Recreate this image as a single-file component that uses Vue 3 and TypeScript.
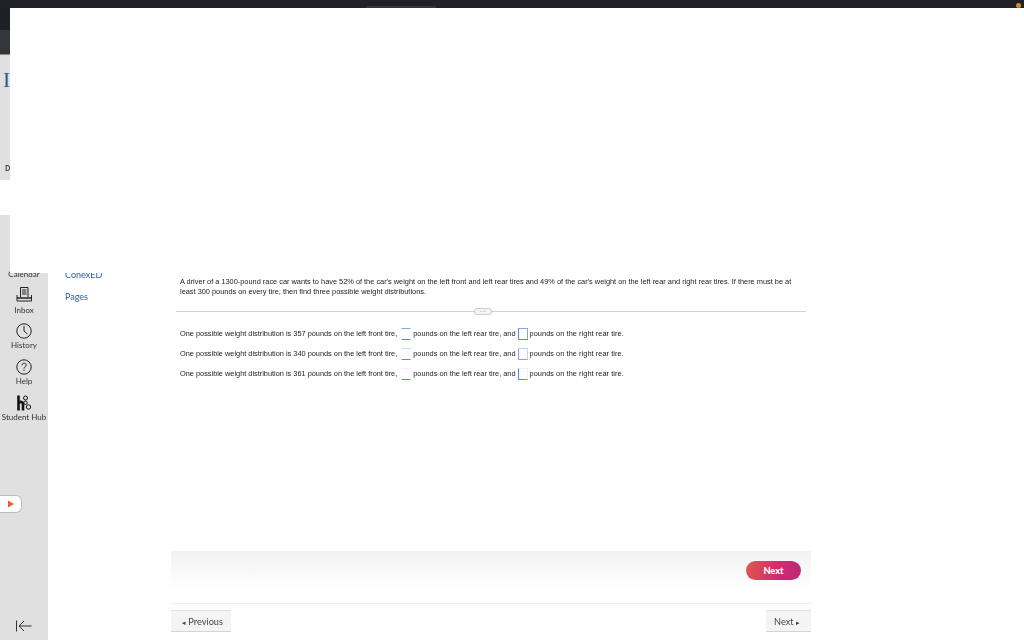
<template>
  <div class="page">
    <div class="topbar">
      <div class="tab"></div>
      <span class="dot"></span>
    </div>
    <div class="body">
      <aside class="rail">
        <div class="rail-dark"></div>
        <div class="rail-mid"></div>
        <div class="rail-head">
          <span class="logo">I</span>
          <span class="cut">D</span>
        </div>
        <div class="rail-gap"></div>
        <div class="rail-nav">
          <span class="rail-label cal">Calendar</span>
          <div class="rail-item inbox">
            <svg width="16" height="16" viewBox="0 0 16 16" fill="none" stroke="#222" stroke-width="1">
              <path d="M4.500 11V1.500h7.500V11" />
              <path d="M6 4h4.500M6 6h4.500M6 8h4.500" />
              <path d="M1 9v6h14.500V9" />
              <path d="M1 12h14.500" stroke-width="1.500" />
            </svg>
            <span class="rail-label">Inbox</span>
          </div>
          <div class="rail-item">
            <svg width="16" height="16" viewBox="0 0 16 16" fill="none" stroke="#222" stroke-width="1">
              <circle cx="8" cy="8" r="7.200" />
              <path d="M8 3v5l3.500 3" />
            </svg>
            <span class="rail-label">History</span>
          </div>
          <div class="rail-item">
            <svg width="16" height="16" viewBox="0 0 16 16" fill="none" stroke="#222" stroke-width="1">
              <circle cx="8" cy="8" r="7.200" />
              <path d="M6 6.300c0-2.800 4.200-2.800 4.200-.2 0 1.700-2.200 1.700-2.200 3.500" />
              <path d="M8 10.800v1.300" />
            </svg>
            <span class="rail-label">Help</span>
          </div>
          <div class="rail-item">
            <svg width="16" height="16" viewBox="0 0 16 16" fill="none" stroke="#111">
              <path d="M2.500 0.500v15" stroke-width="2.600" />
              <path d="M2.500 8c2-1.700 4.500-1.500 4.500 1.500v6" stroke-width="2.600" />
              <circle cx="9.500" cy="3" r="2" stroke-width="1" />
              <circle cx="9.500" cy="7.800" r="1.700" stroke-width="1" />
              <circle cx="12.500" cy="12" r="2.200" stroke-width="1" />
            </svg>
            <span class="rail-label">Student Hub</span>
          </div>
        </div>
        <div class="play">
          <svg width="8" height="8" viewBox="0 0 8 8"><path d="M1 0.500 7 4 1 7.500z" fill="#e8662a" /></svg>
        </div>
        <div class="collapse">
          <svg width="16" height="12" viewBox="0 0 16 12" fill="none" stroke="#333" stroke-width="1">
            <path d="M0.500 0.500v11" />
            <path d="M15.500 6H3" />
            <path d="M8 1 3 6l5 5" />
          </svg>
        </div>
      </aside>

      <nav class="links">
        <a class="link cut-link">ConexED</a>
        <a class="link">Pages</a>
      </nav>

      <main class="main">
        <div class="question">
          <p class="prompt">A driver of a 1300-pound race car wants to have 52% of the car's weight on the left front and left rear tires and 49% of the car's weight on the left rear and right rear tires. If there must be at least 300 pounds on every tire, then find three possible weight distributions.</p>
          <div class="divider">
            <span class="more">...</span>
          </div>
          <div class="answers">
            <div v-for="row in rows" :key="row.front" class="answer">
              <span>One possible weight distribution is {{ row.front }} pounds on the left front tire,</span>
              <span class="blank first" :class="row.tone"></span>
              <span>pounds on the left rear tire, and</span>
              <span class="blank second" :class="row.tone"></span>
              <span class="last">pounds on the right rear tire.</span>
            </div>
          </div>
        </div>
        <div class="action">
          <button class="next-pill">Next</button>
        </div>
        <div class="pager">
          <button class="page-btn prev"><span class="tri">◂</span> Previous</button>
          <button class="page-btn fwd">Next <span class="tri">▸</span></button>
        </div>
      </main>
    </div>
    <div class="overlay"></div>
  </div>
</template>

<script setup lang="ts">
const rows = [
  { front: 357, tone: "tone-a" },
  { front: 340, tone: "tone-b" },
  { front: 361, tone: "tone-c" },
];
</script>

<style>
html,
body {
  margin: 0;
  background: #fff;
}
</style>

<style scoped>
.page {
  position: relative;
  width: 1024px;
  height: 640px;
  overflow: hidden;
  font-family: "Lato", "Liberation Sans", sans-serif;
  background: #fff;
}

.topbar {
  position: relative;
  height: 8px;
  background: #202126;
}

.tab {
  position: absolute;
  left: 366px;
  top: 6px;
  width: 70px;
  height: 2px;
  background: #35363b;
}

.dot {
  position: absolute;
  left: 1016px;
  top: 3px;
  width: 5px;
  height: 5px;
  border-radius: 50%;
  background: #d98a2b;
}

.body {
  display: flex;
  height: 632px;
}

.rail {
  position: relative;
  display: flex;
  flex-direction: column;
  width: 48px;
  flex: none;
  background: #e0e0e0;
}

.rail-dark {
  height: 22px;
  background: #1f2025;
}

.rail-mid {
  height: 25px;
  background: #34363c;
  border-bottom: 1px solid #8a8a8a;
  box-sizing: border-box;
}

.rail-head {
  position: relative;
  height: 125px;
}

.logo {
  position: absolute;
  left: 3px;
  top: 13px;
  font-family: "Liberation Serif", serif;
  font-size: 21px;
  line-height: 24px;
  color: #2a5a9c;
}

.cut {
  position: absolute;
  left: 5px;
  top: 109px;
  font-family: "Liberation Mono", monospace;
  font-size: 9px;
  line-height: 10px;
  color: #222;
  filter: blur(0.3px);
}

.rail-gap {
  height: 35px;
  background: #fff;
}

.rail-nav {
  display: flex;
  flex-direction: column;
  align-items: center;
  padding-top: 54px;
  filter: blur(0.3px);
}

.rail-label {
  font-size: 8px;
  line-height: 11px;
  color: #333;
  white-space: nowrap;
}

.cal {
  height: 11px;
}

.rail-item {
  display: flex;
  flex-direction: column;
  align-items: center;
  gap: 1px;
  height: 36px;
}

.inbox {
  margin-top: 6px;
  height: 37px;
  gap: 3px;
}

.play {
  display: flex;
  align-items: center;
  padding-left: 7px;
  box-sizing: border-box;
  margin-top: 64px;
  width: 22px;
  height: 18px;
  background: #fff;
  border: 1px solid #bbb;
  border-left: none;
  border-radius: 0 6px 6px 0;
}

.collapse {
  margin-top: auto;
  margin-bottom: 8px;
  padding-left: 16px;
  line-height: 0;
}

.links {
  display: flex;
  flex-direction: column;
  gap: 11px;
  width: 123px;
  flex: none;
  box-sizing: border-box;
  padding: 261px 0 0 17px;
  filter: blur(0.3px);
}

.link {
  font-size: 9px;
  line-height: 11px;
  color: #2c5f9e;
}

.main {
  display: flex;
  flex-direction: column;
  width: 640px;
  flex: none;
}

.question {
  height: 543px;
  box-sizing: border-box;
  padding: 269px 0 0 9px;
  font-family: "Liberation Sans", sans-serif;
  font-size: 7.37px;
  color: #222;
  filter: blur(0.4px);
}

.prompt {
  margin: 0;
  width: 620px;
  font-size: 7.39px;
  line-height: 9.500px;
}

.divider {
  position: relative;
  display: flex;
  justify-content: center;
  margin: 15px 0 0 -4px;
  width: 630px;
  height: 1px;
  background: #d2d2d6;
}

.more {
  position: absolute;
  left: 298px;
  top: -3px;
  width: 18px;
  height: 7px;
  font-size: 6px;
  line-height: 3px;
  letter-spacing: 0.5px;
  text-align: center;
  color: #555;
  background: #f4f4f4;
  border: 1px solid #ccc;
  border-radius: 3px;
  box-sizing: border-box;
}

.answers {
  display: flex;
  flex-direction: column;
  gap: 7px;
  padding-top: 15px;
}

.answer {
  display: flex;
  align-items: center;
  gap: 2px;
  height: 13px;
  white-space: nowrap;
}

.last {
  letter-spacing: 0.06px;
}

.blank {
  width: 10px;
  height: 12px;
  box-sizing: border-box;
  border: 1px solid transparent;
  border-bottom-color: #5f86e0;
}

.blank.first {
  margin-left: 2px;
}

.blank.first.tone-a {
  border-top-color: #86a4ea;
}

.blank.first.tone-b {
  border-top-color: #c4d3f2;
}

.blank.first.tone-c {
  border-top-color: #eef1f8;
}

.blank.second.tone-a {
  border-color: #86a4ea;
  border-left-color: #5f86e0;
  border-bottom-color: #5f86e0;
}

.blank.second.tone-b {
  border-color: #c4d3f2;
  border-left-color: #86a4ea;
  border-bottom-color: #86a4ea;
}

.blank.second.tone-c {
  border-color: #eef1f8;
  border-left-color: #5f86e0;
  border-bottom-color: #5f86e0;
}

.action {
  display: flex;
  justify-content: flex-end;
  align-items: flex-start;
  height: 53px;
  box-sizing: border-box;
  padding: 10px 10px 0 0;
  background: linear-gradient(#f2f2f2, #fff 75%);
  border-bottom: 1px solid #f0f0f0;
}

.next-pill {
  width: 55px;
  height: 19px;
  padding: 0;
  border: none;
  border-radius: 10px;
  font-family: "Lato", sans-serif;
  font-size: 9.200px;
  font-weight: 900;
  color: #fff;
  background: linear-gradient(100deg, #e0574a, #cf2a72 60%, #b82a78);
}

.pager {
  display: flex;
  justify-content: space-between;
  padding-top: 6px;
}

.page-btn {
  height: 22px;
  border: none;
  border-top: 1px solid #e2e2e2;
  border-bottom: 1px solid #d4d4d4;
  background: #f4f4f4;
  font-family: "Lato", sans-serif;
  font-size: 9.200px;
  color: #444;
  filter: blur(0.25px);
}

.prev {
  padding: 0 8px 0 11px;
}

.fwd {
  padding: 0 11px 0 8px;
}

.tri {
  font-size: 7px;
}

.overlay {
  position: absolute;
  left: 10px;
  top: 8px;
  right: 0;
  height: 265px;
  background: #fff;
}
</style>
